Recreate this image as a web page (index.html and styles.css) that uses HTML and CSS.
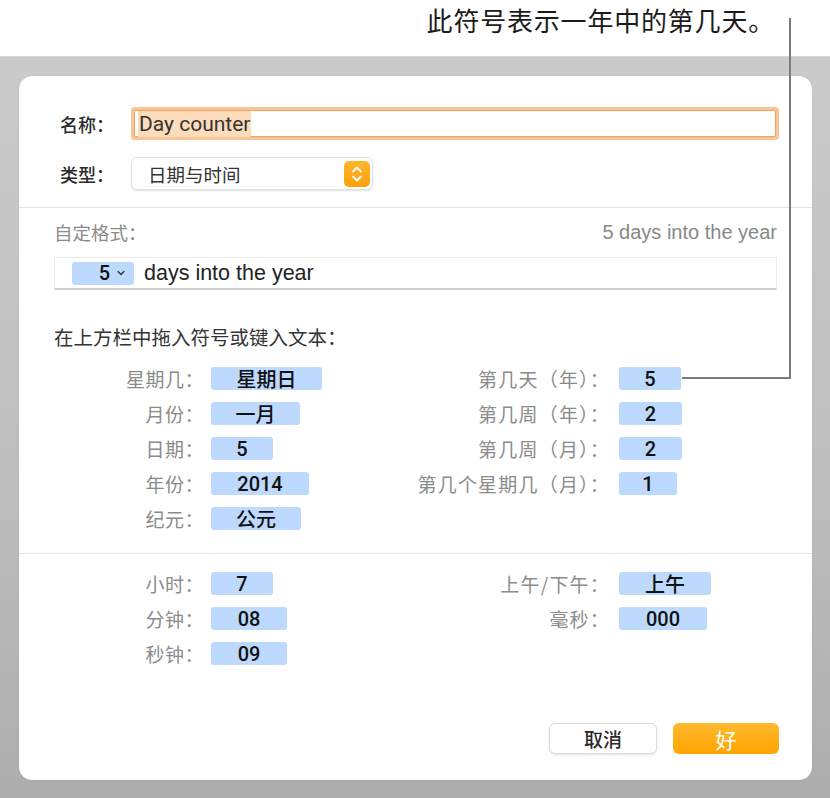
FILE: index.html
```html
<!DOCTYPE html>
<html lang="zh-CN">
<head>
<meta charset="utf-8">
<title>Day counter</title>
<link rel="stylesheet" href="styles.css">
</head>
<body>
<div class="caption">此符号表示一年中的第几天。</div>
<div class="stage">
  <div class="dialog">
    <div class="top">
      <div class="field-row">
        <span class="top-label">名称：</span>
        <div class="name-input"><span class="sel">Day counter</span></div>
      </div>
      <div class="field-row">
        <span class="top-label">类型：</span>
        <div class="select">
          <span>日期与时间</span>
          <span class="stepper">
            <svg width="26" height="26" viewBox="0 0 26 26"><path d="M9 10.5 L13 6.5 L17 10.5" fill="none" stroke="#fff" stroke-width="1.8" stroke-linecap="round" stroke-linejoin="round"/><path d="M9 15.5 L13 19.5 L17 15.5" fill="none" stroke="#fff" stroke-width="1.8" stroke-linecap="round" stroke-linejoin="round"/></svg>
          </span>
        </div>
      </div>
    </div>
    <div class="sep"></div>
    <div class="format">
      <div class="format-head">
        <span class="muted">自定格式：</span>
        <span class="muted latin">5 days into the year</span>
      </div>
      <div class="format-field">
        <span class="ftoken">5<svg width="10" height="8" viewBox="0 0 10 8"><path d="M2 2.5 L5 5.5 L8 2.5" fill="none" stroke="#333" stroke-width="1.4" stroke-linecap="round" stroke-linejoin="round"/></svg></span>
        <span class="ftext">days into the year</span>
      </div>
      <div class="hint">在上方栏中拖入符号或键入文本：</div>
      <div class="grid">
        <span class="lbl l1">星期几：</span><span class="cell"><span class="tok" style="width:111px">星期日</span></span>
        <span class="lbl l2">第几天（年）：</span><span class="cell"><span class="tok" style="width:62px">5</span></span>

        <span class="lbl l1">月份：</span><span class="cell"><span class="tok" style="width:89px">一月</span></span>
        <span class="lbl l2">第几周（年）：</span><span class="cell"><span class="tok" style="width:63px">2</span></span>

        <span class="lbl l1">日期：</span><span class="cell"><span class="tok" style="width:62px">5</span></span>
        <span class="lbl l2">第几周（月）：</span><span class="cell"><span class="tok" style="width:63px">2</span></span>

        <span class="lbl l1">年份：</span><span class="cell"><span class="tok" style="width:98px">2014</span></span>
        <span class="lbl l2">第几个星期几（月）：</span><span class="cell"><span class="tok" style="width:58px">1</span></span>

        <span class="lbl l1">纪元：</span><span class="cell"><span class="tok" style="width:90px">公元</span></span>
        <span class="lbl l2"></span><span class="cell"></span>
      </div>
    </div>
    <div class="sep"></div>
    <div class="time">
      <div class="grid">
        <span class="lbl l1">小时：</span><span class="cell"><span class="tok" style="width:62px">7</span></span>
        <span class="lbl l2">上午/下午：</span><span class="cell"><span class="tok" style="width:92px">上午</span></span>

        <span class="lbl l1">分钟：</span><span class="cell"><span class="tok" style="width:76px">08</span></span>
        <span class="lbl l2">毫秒：</span><span class="cell"><span class="tok" style="width:88px">000</span></span>

        <span class="lbl l1">秒钟：</span><span class="cell"><span class="tok" style="width:76px">09</span></span>
        <span class="lbl l2"></span><span class="cell"></span>
      </div>
      <div class="buttons">
        <button class="btn cancel">取消</button>
        <button class="btn ok">好</button>
      </div>
    </div>
  </div>
</div>
<svg class="callout" width="830" height="798" viewBox="0 0 830 798"><path d="M790 18 V378 H682" fill="none" stroke="#7b7b7b" stroke-width="2"/></svg>
</body>
</html>
```
FILE: styles.css
```css
* { box-sizing: border-box; }
html, body {
  margin: 0;
  padding: 0;
}
body {
  width: 830px;
  height: 798px;
  overflow: hidden;
  background: #ffffff;
  font-family: "Liberation Sans", "Noto Sans CJK SC", sans-serif;
  color: #222;
  position: relative;
}
.caption {
  height: 56px;
  padding: 3px 55px 0 0;
  text-align: right;
  font-family: "Noto Sans CJK SC", sans-serif;
  font-size: 26px;
  letter-spacing: 0.8px;
  line-height: 34px;
  color: #1b1b1b;
}
.stage {
  height: 742px;
  padding: 19px 0 0 19px;
  background: linear-gradient(to bottom, #cbcbcb 0%, #bdbdbd 60%, #adadad 100%);
  border-top: 1px solid #d6d6d6;
}
.dialog {
  width: 793px;
  height: 704px;
  background: #fff;
  border-radius: 13px;
  box-shadow: 0 0 1px rgba(0,0,0,0.25);
  display: flex;
  flex-direction: column;
}
.top {
  padding: 31px 33px 17px 41px;
  display: flex;
  flex-direction: column;
  gap: 17px;
}
.field-row {
  display: flex;
  align-items: center;
  height: 33px;
}
.top-label {
  width: 71px;
  font-family: "Noto Sans CJK SC", sans-serif;
  font-size: 18px;
  font-weight: 500;
  color: #2a2a2a;
}
.name-input {
  flex: 1;
  height: 33px;
  border: 3px solid #fac592;
  border-radius: 4px;
  box-shadow: inset 0 0 0 1px #eea469;
  padding: 0 0 0 4px;
  display: flex;
  align-items: center;
}
.sel {
  background: #fcdcbb;
  font-family: "Roboto", "Liberation Sans", sans-serif;
  font-size: 21px;
  line-height: 26px;
  color: #333;
  padding: 0 1px;
}
.select {
  width: 242px;
  height: 33px;
  border-radius: 6px;
  border: 1px solid #e0e0e0;
  box-shadow: 0 1px 2px rgba(0,0,0,0.12);
  display: flex;
  align-items: center;
  justify-content: space-between;
  padding: 0 2px 0 16px;
  font-family: "Noto Sans CJK SC", sans-serif;
  font-size: 18.5px;
  color: #333;
}
.stepper {
  width: 26px;
  height: 26px;
  border-radius: 5px;
  background: linear-gradient(to bottom, #ffb52c, #fda10c);
  display: flex;
}
.sep {
  height: 1px;
  background: #e3e3e3;
}
.format {
  padding: 12px 35px 23px 35px;
}
.format-head {
  display: flex;
  justify-content: space-between;
  align-items: center;
  height: 24px;
}
.muted {
  color: #8b8b8b;
  font-family: "Noto Sans CJK SC", sans-serif;
  font-size: 18.5px;
}
.muted.latin {
  font-family: "Liberation Sans", sans-serif;
  font-size: 20px;
  color: #888;
}
.format-field {
  margin-top: 13px;
  height: 33px;
  border: 1px solid #ececec;
  border-bottom: 2px solid #cfcfcf;
  display: flex;
  align-items: center;
  padding-left: 17px;
}
.ftoken {
  width: 62px;
  height: 23px;
  background: #bdd9fd;
  border-radius: 3px;
  display: flex;
  align-items: center;
  justify-content: flex-end;
  padding-right: 8px;
  gap: 6px;
  font-family: "Roboto", sans-serif;
  font-weight: 500;
  font-size: 20px;
  color: #111;
}
.ftext {
  margin-left: 10px;
  font-size: 21.5px;
  color: #222;
}
.hint {
  margin-top: 35px;
  height: 24px;
  line-height: 24px;
  font-family: "Noto Sans CJK SC", sans-serif;
  font-size: 19.5px;
  color: #333;
}
.grid {
  margin-top: 18px;
  display: grid;
  grid-template-columns: 157px 150px 258px 1fr;
  grid-auto-rows: 23px;
  row-gap: 12px;
  align-items: center;
}
.time .grid {
  margin-top: 0;
}
.time {
  padding: 18px 33px 26px 35px;
  flex: 1;
  display: flex;
  flex-direction: column;
}
.lbl {
  text-align: right;
  font-family: "Noto Sans CJK SC", sans-serif;
  font-size: 19px;
  letter-spacing: 0.5px;
  line-height: 23px;
  color: #8b8b8b;
  white-space: nowrap;
}
.l1 { padding-right: 7px; }
.l2 { padding-right: 9px; letter-spacing: 1.2px; }
.cell {
  display: flex;
}
.tok {
  height: 23px;
  background: #bdd9fd;
  border-radius: 3px;
  display: flex;
  align-items: center;
  justify-content: center;
  font-family: "Roboto", "Noto Sans CJK SC", sans-serif;
  font-size: 20px;
  font-weight: 500;
  color: #111;
}
.buttons {
  margin-top: auto;
  display: flex;
  justify-content: flex-end;
  gap: 16px;
}
.btn {
  height: 31px;
  border-radius: 6px;
  font-family: "Noto Sans CJK SC", sans-serif;
  font-size: 19px;
  font-weight: 500;
  display: flex;
  align-items: center;
  justify-content: center;
  padding: 0;
}
.cancel {
  width: 108px;
  background: #fff;
  border: 1px solid #dcdcdc;
  box-shadow: 0 1px 2px rgba(0,0,0,0.12);
  color: #2a2a2a;
}
.ok {
  width: 106px;
  background: linear-gradient(to bottom, #ffb92f, #ffa500);
  border: none;
  color: #fff;
  font-weight: 400;
  font-size: 21px;
}
.callout {
  position: absolute;
  left: 0;
  top: 0;
  pointer-events: none;
}
```
